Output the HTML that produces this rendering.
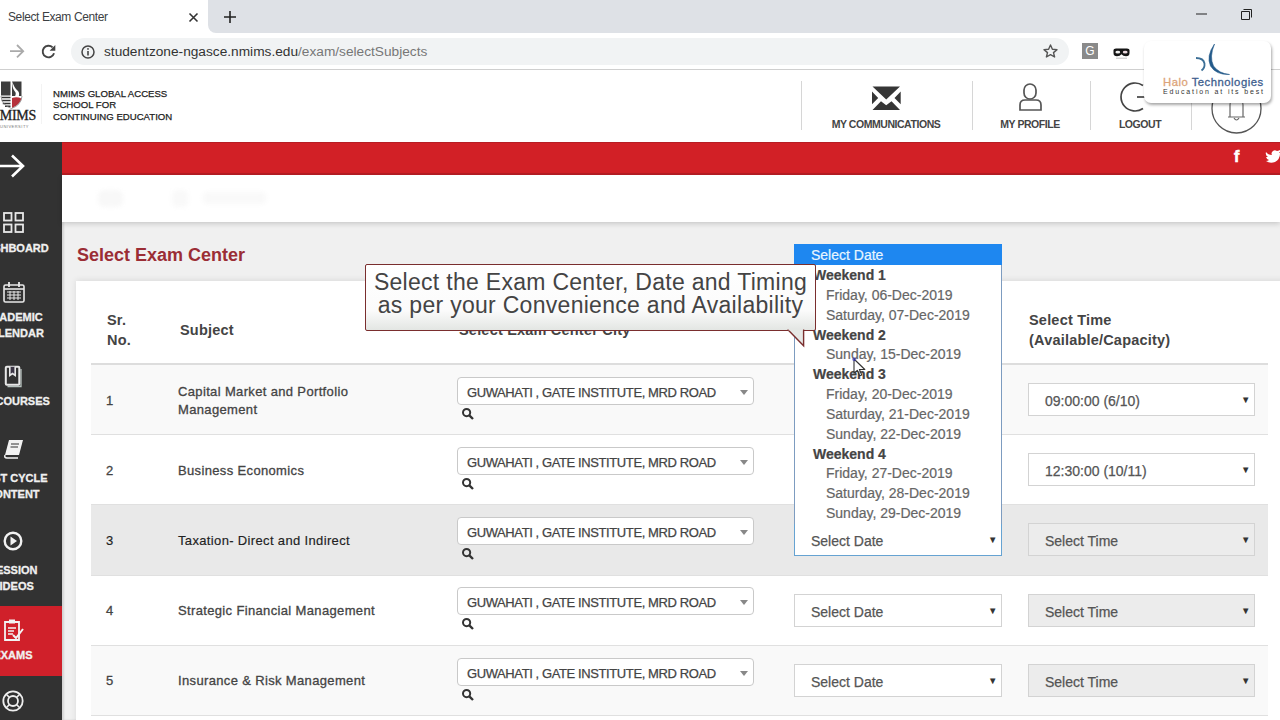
<!DOCTYPE html>
<html><head><meta charset="utf-8">
<style>
*{box-sizing:border-box}
html,body{margin:0;padding:0}
body{width:1280px;height:720px;overflow:hidden;position:relative;background:#fff;font-family:"Liberation Sans",sans-serif;color:#444}
.a{position:absolute}
svg{position:absolute;overflow:visible}
/* chrome */
#tabbar{left:208px;top:0;width:1072px;height:33px;background:#dee1e6;border-bottom-left-radius:8px}
#tab{left:0;top:0;width:0;height:0}
#toolbar{left:0;top:33px;width:1280px;height:36px;background:#fff}
#tbline{left:0;top:69px;width:1280px;height:1px;background:#cfcfcf}
#urlbox{left:71px;top:38px;width:998px;height:27px;background:#f1f3f4;border-radius:14px}
/* header */
#hdr{left:0;top:70px;width:1280px;height:72px;background:#fff}
.nav{font-weight:bold;font-size:10.5px;color:#444;white-space:nowrap;letter-spacing:-0.45px;text-align:center;width:160px}
.sep{width:1px;background:#d6d6d6;top:81px;height:49px}
#redbar{left:62px;top:142px;width:1218px;height:33px;background:#d22026;box-shadow:inset 0 -2px 0 #b71d23, inset 0 1px 0 #b71d23}
#side{left:0;top:142px;width:62px;height:578px;background:#323232;overflow:hidden}
.sl{color:#f0f0f0;-webkit-text-stroke:0.3px #f0f0f0;font-weight:bold;font-size:11px;white-space:nowrap;text-align:center;width:120px;left:-47px;line-height:16px}
#crumb{left:62px;top:175px;width:1218px;height:47px;background:#fff;box-shadow:0 2px 5px rgba(0,0,0,.16);z-index:1}
#content{left:62px;top:221px;width:1218px;height:499px;background:#f0f0f0;box-shadow:inset 2px 0 2px rgba(0,0,0,.12)}
#h1{left:77px;top:245px;font-size:18px;font-weight:bold;color:#9b2d35;white-space:nowrap}
#card{left:76px;top:281px;width:1210px;height:450px;background:#fff;box-shadow:0 -1px 6px rgba(0,0,0,.09)}
.row{left:91px;width:1177px;height:70px;border-bottom:1px solid #e0e0e0}
.th{font-weight:bold;font-size:14.5px;color:#444;line-height:19.5px;white-space:nowrap;letter-spacing:0.2px}
.td{font-size:13px;color:#444;line-height:17.6px;white-space:nowrap;letter-spacing:0.35px;-webkit-text-stroke:0.3px #444}
.city{left:457px;width:297px;height:28px;border:1px solid #c9c9c9;border-radius:4px;background:#fff;font-size:13px;color:#444;padding-left:9px;line-height:29px;white-space:nowrap;letter-spacing:-0.4px;-webkit-text-stroke:0.25px #444}
.city:after{content:"";position:absolute;left:282px;top:12px;border-left:4px solid transparent;border-right:4px solid transparent;border-top:5px solid #888}
.sel{width:208px;height:33px;border:1px solid #d3d3d3;background:#fff;font-size:14px;color:#555;padding-left:16px;line-height:34px;white-space:nowrap;-webkit-text-stroke:0.25px #555}
.tsel{left:1028px;width:227px;height:33px;border:1px solid #d3d3d3;background:#fff;font-size:14px;color:#555;padding-left:16px;line-height:34px;white-space:nowrap;-webkit-text-stroke:0.25px #555}
.dis{background:#ececec}
.arr{position:absolute;font-size:9.5px;color:#333;top:0px;line-height:31px;-webkit-text-stroke:0}
#dd{left:794px;top:244px;width:208px;height:280px;background:#fff;border:1px solid #7d9cc0;border-top:none;border-bottom:none}
.dl{font-size:14px;line-height:19.9px;white-space:nowrap;position:absolute;-webkit-text-stroke:0.2px currentColor}
#callout{left:365px;top:264px;width:451px;height:67px;border:1.4px solid #7a2e2e;border-radius:2px;background:linear-gradient(#fff 0%,#fbfbfb 70%,#e3e6e3 100%)}
.ct{font-size:23px;color:#444;white-space:nowrap;text-align:center;line-height:23.4px;letter-spacing:0.29px}
</style></head>
<body>
<!-- CHROME -->
<div id="tabbar" class="a"></div>
<div id="tab" class="a"></div>
<div class="a" style="left:8px;top:10px;font-size:12px;color:#3c4043;white-space:nowrap;letter-spacing:-0.4px">Select Exam Center</div>
<svg style="left:189px;top:13px" width="9" height="9"><path d="M0.5 0.5L8.5 8.5M8.5 0.5L0.5 8.5" stroke="#333" stroke-width="1.6"/></svg>
<svg style="left:224px;top:11px" width="12" height="12"><path d="M6 0V12M0 6H12" stroke="#222" stroke-width="1.6"/></svg>
<svg style="left:1196px;top:13px" width="11" height="2"><path d="M0 1H11" stroke="#222" stroke-width="1"/></svg>
<svg style="left:1241px;top:9px" width="11" height="11"><path d="M2.5 0.5H10.5V8.5M0.5 2.5H8.5V10.5H0.5Z" stroke="#222" stroke-width="1" fill="none"/></svg>
<div id="toolbar" class="a"></div>
<div id="tbline" class="a"></div>
<svg style="left:9px;top:44px" width="16" height="15"><path d="M1 7.2H14M8 1L14.2 7.2L8 13.4" stroke="#aaa" stroke-width="1.8" fill="none"/></svg>
<svg style="left:41px;top:44px" width="16" height="16"><path d="M13.05 9.2A5.8 5.8 0 1 1 11.6 3.4" stroke="#444" stroke-width="1.9" fill="none"/><path d="M8.6 6.8H14.3V1.1Z" fill="#444"/></svg>
<div id="urlbox" class="a"></div>
<svg style="left:81px;top:45px" width="14" height="14"><circle cx="7" cy="7" r="6" stroke="#444" stroke-width="1.5" fill="none"/><path d="M7 6V10.5" stroke="#444" stroke-width="1.6"/><circle cx="7" cy="3.9" r="0.9" fill="#444"/></svg>
<div class="a" style="left:104px;top:44px;font-size:13.7px;color:#333;white-space:nowrap">studentzone-ngasce.nmims.edu<span style="color:#777">/exam/selectSubjects</span></div>
<svg style="left:1043px;top:44px" width="15" height="14"><path d="M7.5 1L9.4 5.3L14 5.6L10.5 8.6L11.6 13L7.5 10.6L3.4 13L4.5 8.6L1 5.6L5.6 5.3Z" stroke="#555" stroke-width="1.4" fill="none" stroke-linejoin="round"/></svg>
<div class="a" style="left:1082px;top:43px;width:16px;height:16px;background:#8a8a8a;color:#fff;font-size:12px;text-align:center;line-height:16px">G</div>
<svg style="left:1113px;top:48px" width="18" height="12"><path d="M0.5 2Q0.5 0.5 3 0.5H14Q16.5 0.5 16.5 2V5Q16.5 8.3 13 8.3Q10 8.3 8.5 6.2Q7 8.3 4 8.3Q0.5 8.3 0.5 5Z" fill="#151515"/><ellipse cx="4.8" cy="4.2" rx="2.4" ry="1.4" fill="#f0f0f0"/><ellipse cx="12.2" cy="4.2" rx="2.4" ry="1.4" fill="#ead8de"/><rect x="3" y="9.6" width="11" height="1.3" fill="#cfcfcf"/></svg>

<!-- SITE HEADER -->
<div id="hdr" class="a"></div>
<!-- logo -->
<svg style="left:1px;top:81px" width="22" height="28"><path d="M0 0.5H9.5V14.5H0Z" fill="#3d3d3d"/><path d="M11 0.5H20.5V15H11Z" fill="#3d3d3d"/><path d="M11.2 0Q13 7 17 10Q19 12.5 17.5 16L13.5 16Q16 12.5 13.5 10Q11 7 11.2 0Z" fill="#fff"/><path d="M11 17Q16 15.5 20.5 17.5Q19 23.5 11 27Z" fill="#b5313b"/><path d="M0.5 16.5H9.5M0.8 19.5H9.5M1.8 22.5H9.5M4 25.3H9.5" stroke="#333" stroke-width="1.4"/><path d="M0 15Q0.5 24 10.5 27.5Q20.5 24 21 15" stroke="#888" stroke-width="0.8" fill="none"/></svg>
<div class="a" style="left:-10px;top:108px;font-family:'Liberation Serif',serif;font-size:14px;color:#222;letter-spacing:-0.3px;-webkit-text-stroke:0.3px #222">NMIMS</div>
<div class="a" style="left:0px;top:124px;font-size:4px;color:#777;letter-spacing:0.5px">UNIVERSITY</div>
<div class="a" style="left:41px;top:84px;width:1px;height:40px;background:#f3f3f3"></div>
<div class="a" style="left:53px;top:88px;font-size:9.6px;line-height:11.3px;color:#222;font-weight:normal;-webkit-text-stroke:0.25px #222;white-space:nowrap">NMIMS GLOBAL ACCESS<br>SCHOOL FOR<br>CONTINUING EDUCATION</div>
<div class="a sep" style="left:801px"></div>
<div class="a sep" style="left:972px"></div>
<div class="a sep" style="left:1090px"></div>
<div class="a sep" style="left:1191px"></div>
<svg style="left:872px;top:86px" width="29" height="25"><path d="M0.5 0.5H28L14.2 13.5Z M0 5.5L6.2 12L0 18.2Z M28.7 5.5L22.5 12L28.7 18.2Z M0.5 24L9 15.3L14.2 19.3L19.5 15.3L28 24Z" fill="#363636"/></svg>
<div class="a nav" style="left:806px;top:118px">MY COMMUNICATIONS</div>
<svg style="left:1019px;top:83px" width="23" height="29"><rect x="5" y="1" width="12" height="15" rx="6" stroke="#555" stroke-width="1.7" fill="none"/><path d="M1 27V22Q1 17 6 17H17Q22 17 22 22V27Z" stroke="#555" stroke-width="1.7" fill="none"/></svg>
<div class="a nav" style="left:950px;top:118px">MY PROFILE</div>
<svg style="left:1122px;top:82px" width="30" height="30"><path d="M21 3.5A14 14 0 1 0 21 26.5" stroke="#444" stroke-width="1.7" fill="none"/><path d="M15 15H23" stroke="#444" stroke-width="1.7"/></svg>
<div class="a nav" style="left:1060px;top:118px">LOGOUT</div>
<svg style="left:1211px;top:83px" width="52" height="52"><circle cx="25.5" cy="25.5" r="24.5" stroke="#555" stroke-width="1.3" fill="none"/><path d="M17 34H34M19 34V22Q19 14 25.5 14Q32 14 32 22V34" stroke="#666" stroke-width="1.2" fill="none"/><path d="M23 35Q25.5 39 28 35" stroke="#666" stroke-width="1.2" fill="none"/></svg>

<!-- watermark -->
<div class="a" style="left:1144px;top:41px;width:127px;height:62px;background:#fff;border-radius:7px;box-shadow:1px 2px 3px rgba(0,0,0,.35)"></div>
<svg style="left:1195px;top:43px" width="40" height="33"><path d="M19.5 1Q11 13 15.5 23Q21 32 34.5 31.5Q24 30.5 18.5 23Q14 14 19.5 1Z" fill="#245a8a" stroke="#245a8a" stroke-width="0.6"/><path d="M1 15Q8.5 15 9.5 20.5Q10 25 6.5 27.5" stroke="#3c6f96" stroke-width="1.8" fill="none"/></svg>
<div class="a" style="left:1163px;top:76px;font-size:11.3px;white-space:nowrap;letter-spacing:0.5px;-webkit-text-stroke:0.3px currentColor"><span style="color:#dca47a;-webkit-text-stroke:0.3px #dca47a">Halo</span> <span style="color:#40608e;-webkit-text-stroke:0.3px #40608e">Technologies</span></div>
<div class="a" style="left:1163px;top:88px;font-size:7px;color:#333;white-space:nowrap;letter-spacing:1.85px">Education at its best</div>

<!-- RED BAR -->
<div id="redbar" class="a"></div>
<div class="a" style="left:1234px;top:148px;font-size:16px;font-weight:bold;color:#fff;-webkit-text-stroke:0.6px #fff">f</div>
<svg style="left:1266px;top:150px" width="16" height="14"><path d="M16 2Q14 3 13 3Q15 1 14 0Q12 1 11 1Q8 -1 6 2Q5 4 6 5Q2 5 0 2Q-1 5 2 7Q1 7 0 7Q1 10 3 10Q2 11 0 11Q4 14 9 12Q14 9 14 4Z" fill="#fff"/></svg>

<!-- SIDEBAR -->
<div id="side" class="a">
 <svg style="left:0px;top:12px" width="26" height="24"><path d="M0 12H23M12 1.5L23 12L12 22.5" stroke="#fff" stroke-width="2.6" fill="none"/></svg>
 <svg style="left:3px;top:70px" width="21" height="21"><rect x="1" y="1" width="7.5" height="7.5" stroke="#e8e8e8" stroke-width="1.8" fill="none"/><rect x="12.5" y="1" width="7.5" height="7.5" stroke="#e8e8e8" stroke-width="1.8" fill="none"/><rect x="1" y="12.5" width="7.5" height="7.5" stroke="#e8e8e8" stroke-width="1.8" fill="none"/><rect x="12.5" y="12.5" width="7.5" height="7.5" stroke="#e8e8e8" stroke-width="1.8" fill="none"/></svg>
 <div class="a sl" style="top:98px">DASHBOARD</div>
 <svg style="left:3px;top:140px" width="22" height="21"><rect x="1" y="3" width="20" height="17" rx="1.5" stroke="#e8e8e8" stroke-width="1.6" fill="none"/><path d="M1 7H21" stroke="#e8e8e8" stroke-width="1.6"/><path d="M6 0V5M16 0V5" stroke="#e8e8e8" stroke-width="1.8"/><path d="M4 10H18M4 13H18M4 16H18M7 9V18M11 9V18M15 9V18" stroke="#e8e8e8" stroke-width="1"/></svg>
 <div class="a sl" style="top:167px">ACADEMIC<br>CALENDAR</div>
 <svg style="left:4px;top:223px" width="19" height="23"><path d="M17 4V21.5H3.5" stroke="#b8c4c0" stroke-width="1.3" fill="none"/><rect x="1.8" y="1.8" width="13.5" height="18" rx="1" stroke="#e8e8e8" stroke-width="2" fill="none"/><path d="M5.8 1.8V10.5L8.5 8.5L11.2 10.5V1.8" stroke="#e8e8e8" stroke-width="1.6" fill="#3b3545"/></svg>
 <div class="a sl" style="top:251px">MY COURSES</div>
 <svg style="left:4px;top:298px" width="19" height="18"><path d="M5 0H19L15 15H1Z" fill="#f2f2f2"/><path d="M1 15Q0 18 3 18H14" stroke="#f2f2f2" stroke-width="1.5" fill="none"/><path d="M7 4H15M6.5 7H14" stroke="#333" stroke-width="1"/></svg>
 <div class="a sl" style="top:328px">LAST CYCLE<br>CONTENT</div>
 <svg style="left:3px;top:389px" width="20" height="20"><circle cx="10" cy="10" r="8.3" stroke="#f2f2f2" stroke-width="2.4" fill="none"/><path d="M7.5 5.5L14 10L7.5 14.5Z" fill="#f2f2f2"/></svg>
 <div class="a sl" style="top:420px">SESSION<br>VIDEOS</div>
 <div class="a" style="left:0;top:464px;width:62px;height:70px;background:#d0202a"></div>
 <svg style="left:4px;top:477px" width="20" height="22"><path d="M1 3H15V21H1Z" stroke="#f2f2f2" stroke-width="1.8" fill="none"/><rect x="5" y="0.5" width="6" height="4" fill="#f2f2f2"/><path d="M4 9H12M4 12H10M4 15H9" stroke="#f2f2f2" stroke-width="1.3"/><path d="M9 16L12 19L19 10" stroke="#f2f2f2" stroke-width="2" fill="none"/></svg>
 <div class="a sl" style="top:505px">EXAMS</div>
 <svg style="left:2px;top:547px" width="22" height="24"><circle cx="11" cy="12" r="9.7" stroke="#eee" stroke-width="1.8" fill="none"/><circle cx="11" cy="12" r="5" stroke="#eee" stroke-width="1.8" fill="none"/><path d="M4 5L7.5 8.5M18 5L14.5 8.5M4 19L7.5 15.5M18 19L14.5 15.5" stroke="#eee" stroke-width="1.6"/></svg>
</div>

<!-- CONTENT -->
<div id="crumb" class="a"></div>
<div id="content" class="a"></div>
<div class="a" style="left:98px;top:190px;width:25px;height:17px;background:#f8f8f8;border-radius:6px;z-index:2;filter:blur(2px)"></div>
<div class="a" style="left:172px;top:190px;width:16px;height:17px;background:#f9f9f9;border-radius:5px;z-index:2;filter:blur(2px)"></div>
<div class="a" style="left:203px;top:192px;width:63px;height:12px;background:#f9f9f9;border-radius:4px;z-index:2;filter:blur(2px)"></div>
<div id="h1" class="a">Select Exam Center</div>
<div id="card" class="a"></div>

<!-- table header -->
<div class="a th" style="left:107px;top:311px">Sr.<br>No.</div>
<div class="a th" style="left:180px;top:321px">Subject</div>
<div class="a th" style="left:459px;top:321px">Select Exam Center City</div>
<div class="a th" style="left:811px;top:319px">Select Date</div>
<div class="a th" style="left:1029px;top:311px">Select Time<br>(Available/Capacity)</div>
<div class="a" style="left:91px;top:363px;width:1177px;height:2px;background:#ddd"></div>

<!-- rows -->
<div class="a row" style="top:365px;background:#f9f9f9"></div>
<div class="a row" style="top:435px;background:#fff"></div>
<div class="a row" style="top:505px;height:71px;background:#e9e9e9"></div>
<div class="a row" style="top:576px;background:#fff"></div>
<div class="a row" style="top:646px;background:#f9f9f9"></div>

<div class="a td" style="left:106px;top:392px">1</div>
<div class="a td" style="left:178px;top:383px">Capital Market and Portfolio<br>Management</div>
<div class="a td" style="left:106px;top:462px">2</div>
<div class="a td" style="left:178px;top:462px">Business Economics</div>
<div class="a td" style="left:106px;top:532px;color:#222;-webkit-text-stroke:0.15px #222">3</div>
<div class="a td" style="left:178px;top:532px;color:#222;-webkit-text-stroke:0.15px #222">Taxation- Direct and Indirect</div>
<div class="a td" style="left:106px;top:602px">4</div>
<div class="a td" style="left:178px;top:602px">Strategic Financial Management</div>
<div class="a td" style="left:106px;top:672px">5</div>
<div class="a td" style="left:178px;top:672px">Insurance &amp; Risk Management</div>

<!-- city selects -->
<div class="a city" style="top:377px">GUWAHATI , GATE INSTITUTE, MRD ROAD</div>
<div class="a city" style="top:447px">GUWAHATI , GATE INSTITUTE, MRD ROAD</div>
<div class="a city" style="top:517px">GUWAHATI , GATE INSTITUTE, MRD ROAD</div>
<div class="a city" style="top:587px">GUWAHATI , GATE INSTITUTE, MRD ROAD</div>
<div class="a city" style="top:658px">GUWAHATI , GATE INSTITUTE, MRD ROAD</div>
<svg style="left:462px;top:408px" width="12" height="12"><circle cx="4.6" cy="4.6" r="3.6" stroke="#333" stroke-width="2" fill="none"/><path d="M7.3 7.3L11 11" stroke="#333" stroke-width="2.4"/></svg>
<svg style="left:462px;top:478px" width="12" height="12"><circle cx="4.6" cy="4.6" r="3.6" stroke="#333" stroke-width="2" fill="none"/><path d="M7.3 7.3L11 11" stroke="#333" stroke-width="2.4"/></svg>
<svg style="left:462px;top:548px" width="12" height="12"><circle cx="4.6" cy="4.6" r="3.6" stroke="#333" stroke-width="2" fill="none"/><path d="M7.3 7.3L11 11" stroke="#333" stroke-width="2.4"/></svg>
<svg style="left:462px;top:618px" width="12" height="12"><circle cx="4.6" cy="4.6" r="3.6" stroke="#333" stroke-width="2" fill="none"/><path d="M7.3 7.3L11 11" stroke="#333" stroke-width="2.4"/></svg>
<svg style="left:462px;top:689px" width="12" height="12"><circle cx="4.6" cy="4.6" r="3.6" stroke="#333" stroke-width="2" fill="none"/><path d="M7.3 7.3L11 11" stroke="#333" stroke-width="2.4"/></svg>

<!-- date selects -->
<div class="a sel" style="left:794px;top:523px;border-color:#66a3d2">Select Date<span class="arr" style="left:193px">&#9660;</span></div>
<div class="a sel" style="left:794px;top:594px">Select Date<span class="arr" style="left:193px">&#9660;</span></div>
<div class="a sel" style="left:794px;top:664px">Select Date<span class="arr" style="left:193px">&#9660;</span></div>

<!-- time selects -->
<div class="a tsel" style="top:383px">09:00:00 (6/10)<span class="arr" style="left:212px">&#9660;</span></div>
<div class="a tsel" style="top:453px">12:30:00 (10/11)<span class="arr" style="left:212px">&#9660;</span></div>
<div class="a tsel dis" style="top:523px">Select Time<span class="arr" style="left:212px">&#9660;</span></div>
<div class="a tsel dis" style="top:594px">Select Time<span class="arr" style="left:212px">&#9660;</span></div>
<div class="a tsel dis" style="top:664px">Select Time<span class="arr" style="left:212px">&#9660;</span></div>

<!-- dropdown -->
<div id="dd" class="a"><div class="a" style="left:0;top:2px;width:206px;height:280px">
 <div class="a" style="left:-1px;top:-2px;width:208px;height:21px;background:#1e87f0"></div>
 <div class="dl" style="left:16px;top:0;color:#e8f6ff">Select Date</div>
 <div class="dl" style="left:18px;top:20px;font-weight:bold;color:#444">Weekend 1</div>
 <div class="dl" style="left:31px;top:40px;color:#666">Friday, 06-Dec-2019</div>
 <div class="dl" style="left:31px;top:60px;color:#666">Saturday, 07-Dec-2019</div>
 <div class="dl" style="left:18px;top:80px;font-weight:bold;color:#444">Weekend 2</div>
 <div class="dl" style="left:31px;top:99px;color:#666">Sunday, 15-Dec-2019</div>
 <div class="dl" style="left:18px;top:119px;font-weight:bold;color:#444">Weekend 3</div>
 <div class="dl" style="left:31px;top:139px;color:#666">Friday, 20-Dec-2019</div>
 <div class="dl" style="left:31px;top:159px;color:#666">Saturday, 21-Dec-2019</div>
 <div class="dl" style="left:31px;top:179px;color:#666">Sunday, 22-Dec-2019</div>
 <div class="dl" style="left:18px;top:199px;font-weight:bold;color:#444">Weekend 4</div>
 <div class="dl" style="left:31px;top:218px;color:#666">Friday, 27-Dec-2019</div>
 <div class="dl" style="left:31px;top:238px;color:#666">Saturday, 28-Dec-2019</div>
 <div class="dl" style="left:31px;top:258px;color:#666">Sunday, 29-Dec-2019</div>
</div></div>

<!-- callout -->
<div id="callout" class="a">
 <div class="a ct" style="left:1px;top:6px;width:447px">Select the Exam Center, Date and Timing<br>as per your Convenience and Availability</div>
</div>
<svg style="left:787px;top:329px" width="20" height="19"><path d="M0.7 0.5L16.6 16.8V0.5" fill="#e6e8e6" stroke="#7a2e2e" stroke-width="1.4"/><path d="M1.5 -0.5H15.9V1.3H1.5Z" fill="#e4e7e4"/></svg>

<!-- cursor -->
<svg style="left:853px;top:358px" width="14" height="20"><path d="M1 1V15.2L4.3 12.3L6.7 17.8L8.8 16.9L6.4 11.5H11.8Z" fill="rgba(255,255,255,0.5)" stroke="#333" stroke-width="1.1" stroke-linejoin="round"/><circle cx="1.2" cy="1.2" r="2" fill="rgba(60,60,210,0.55)"/></svg>
</body></html>
